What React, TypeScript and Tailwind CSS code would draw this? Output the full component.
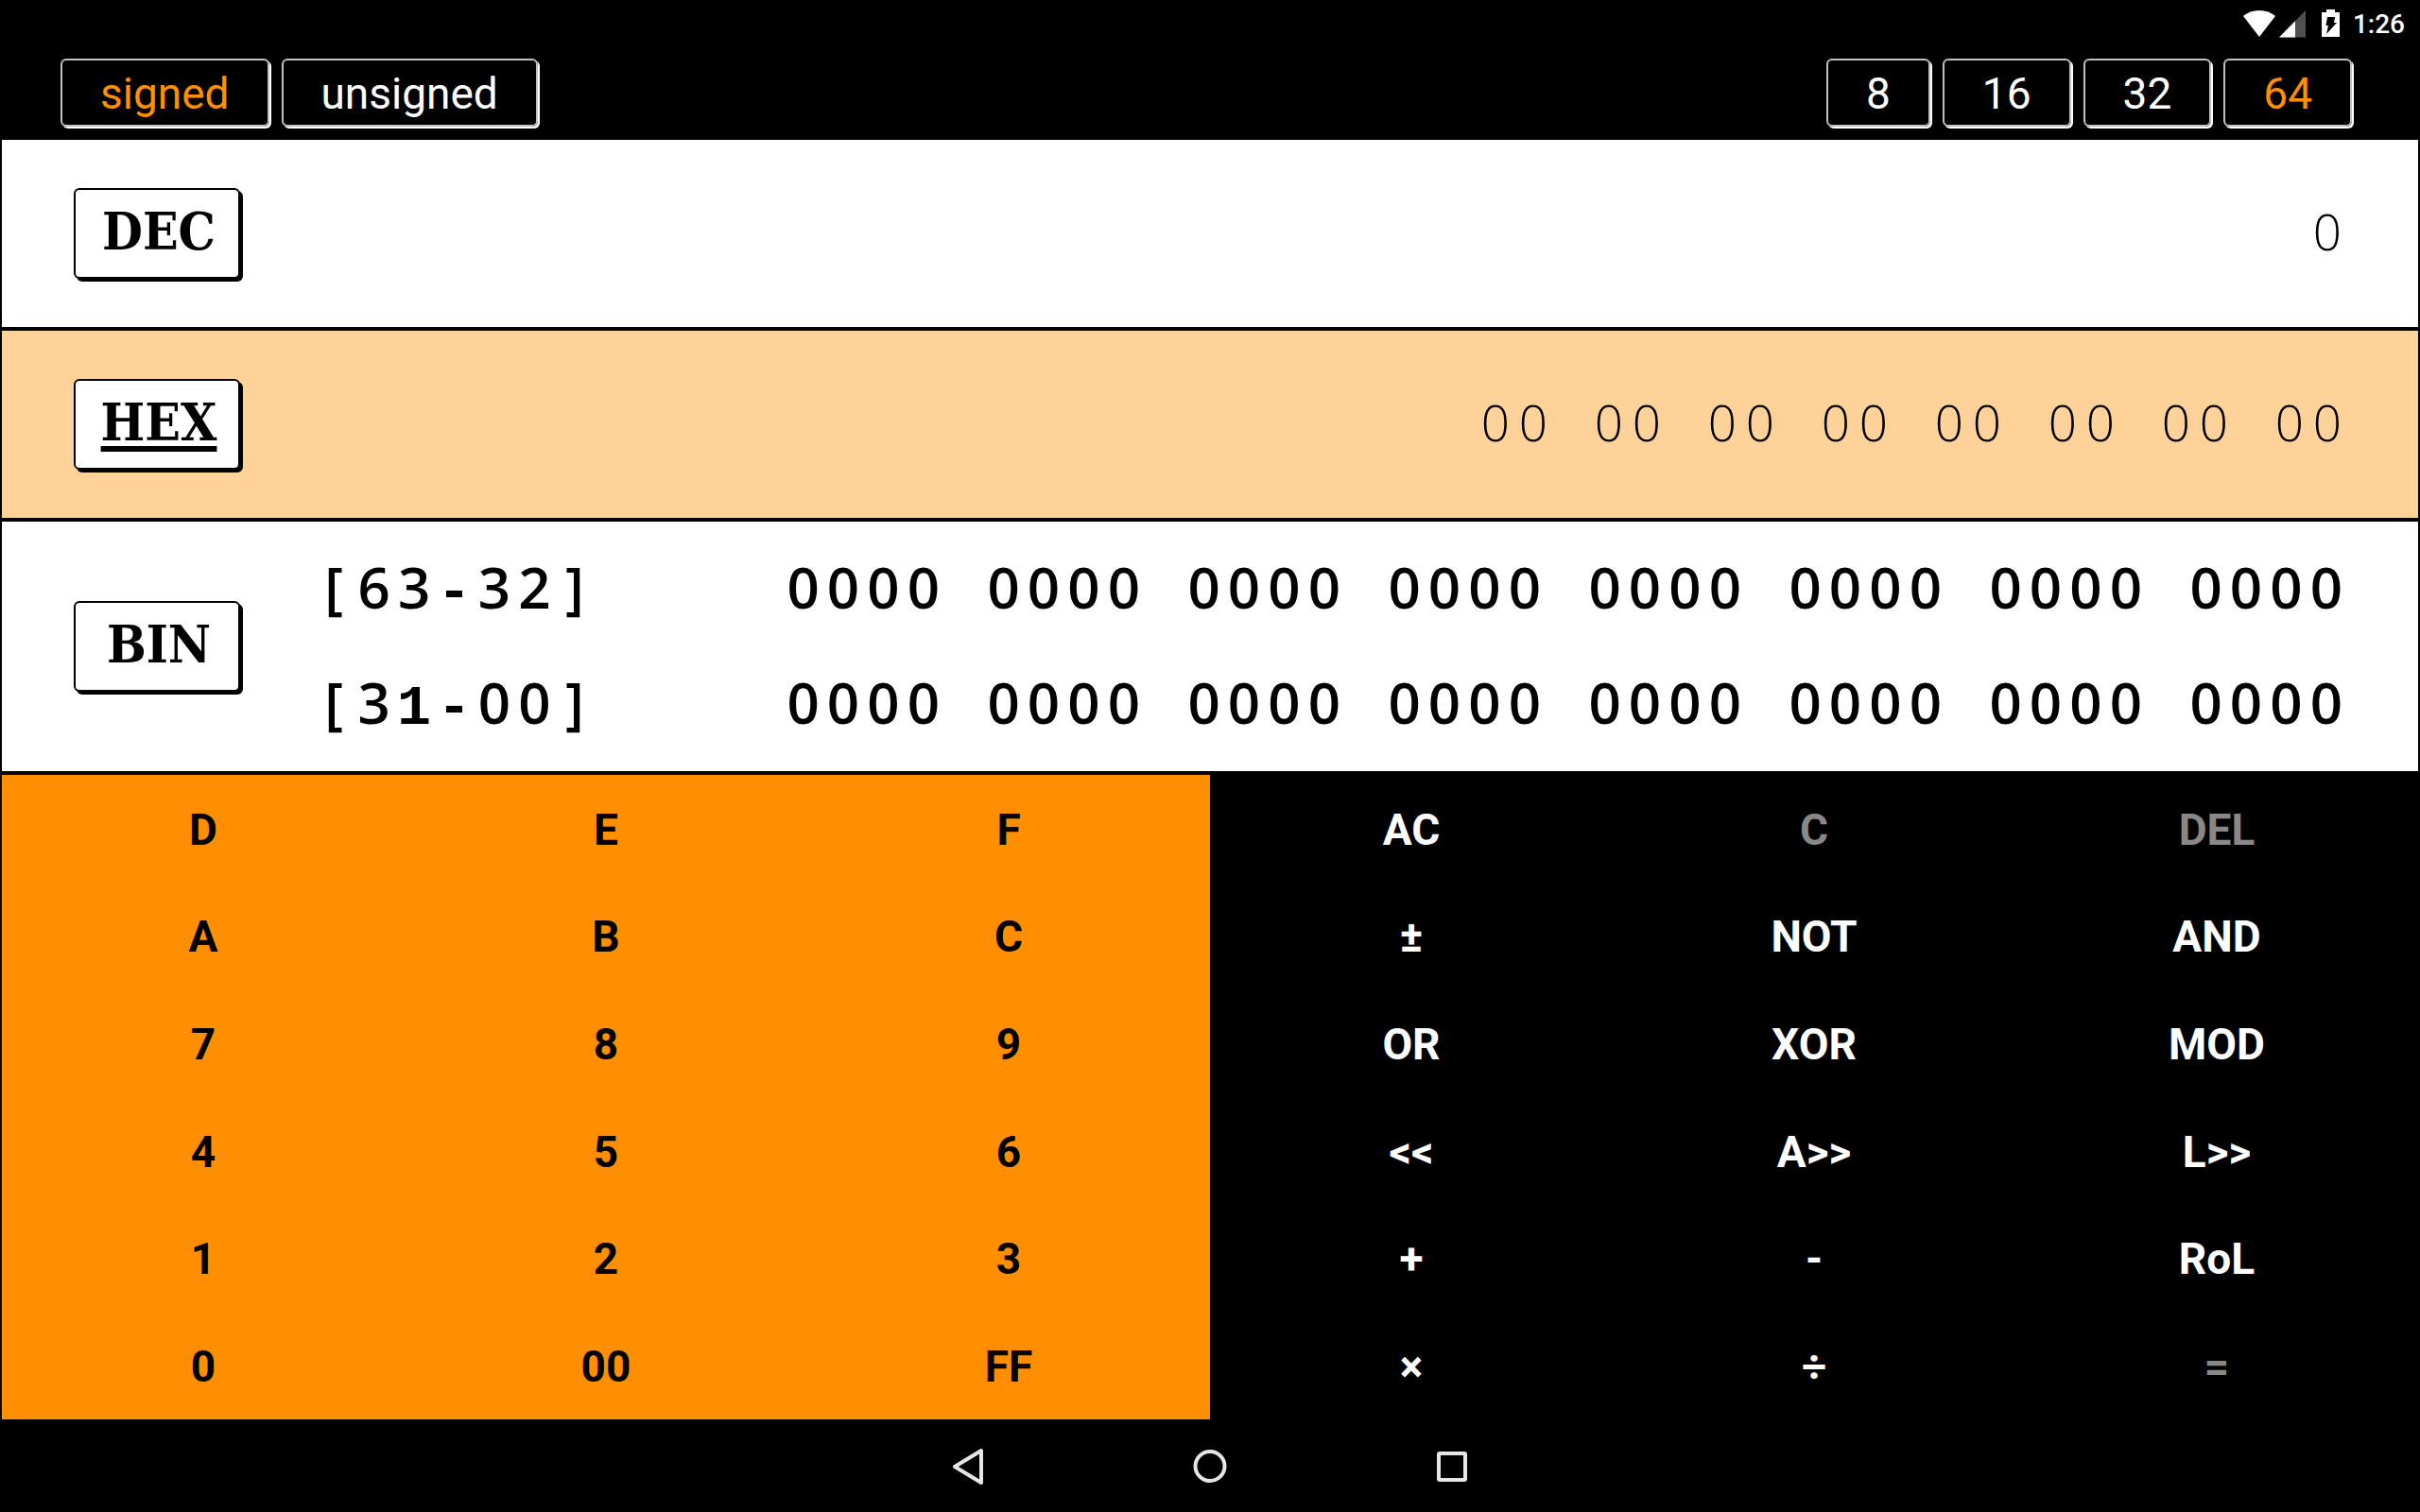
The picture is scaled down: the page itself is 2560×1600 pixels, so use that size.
import type { ReactNode } from "react";

const SIGN_MODES = ["signed", "unsigned"];
const WORD_SIZES = ["8", "16", "32", "64"];

const DIGIT_KEYS = [
  "D", "E", "F",
  "A", "B", "C",
  "7", "8", "9",
  "4", "5", "6",
  "1", "2", "3",
  "0", "00", "FF",
];

const OPERATION_KEYS = [
  "AC", "C", "DEL",
  "±", "NOT", "AND",
  "OR", "XOR", "MOD",
  "<<", "A>>", "L>>",
  "+", "-", "RoL",
  "×", "÷", "=",
];

const DISABLED_KEYS = ["C", "DEL", "="];

const HEX_BYTES = Array.from({ length: 8 }, () => "00");
const BIN_WORDS = [
  { range: "[63-32]", nibbles: Array.from({ length: 8 }, () => "0000") },
  { range: "[31-00]", nibbles: Array.from({ length: 8 }, () => "0000") },
];

function OptionButton({ label, active }: { label: string; active: boolean }) {
  return (
    <button
      type="button"
      aria-pressed={active}
      className={`h-18 rounded-md border-2 border-[#c0c0c0] px-10 text-[46px] leading-[70px] shadow-[2px_2px_0_0_#ffffff] ${
        active ? "text-[#ff8f00]" : "text-white"
      }`}
    >
      {label}
    </button>
  );
}

function BaseButton({ label, active = false }: { label: string; active?: boolean }) {
  return (
    <button
      type="button"
      aria-pressed={active}
      className={`h-24 w-44 shrink-0 rounded-md border-2 border-black bg-white pb-1 pl-1 text-center font-['DejaVu_Serif_Condensed','DejaVu_Serif',serif] text-[55px] leading-[88px] font-bold text-black shadow-[3px_3px_0_0_#000000] ${
        active ? "underline decoration-[6px] underline-offset-[6px]" : ""
      }`}
    >
      {label}
    </button>
  );
}

function Row({ active = false, children }: { active?: boolean; children: ReactNode }) {
  return (
    <section
      className={`flex items-center justify-between border-b-4 border-black pr-19 pl-19 ${
        active ? "bg-[#ffd299]" : "bg-white"
      }`}
    >
      {children}
    </section>
  );
}

function Range({ text }: { text: string }) {
  return (
    <div className="grid w-[297px] grid-cols-7 items-baseline text-center">
      {text.split("").map((char, i) => (
        <span
          key={i}
          className={
            char === "1" || char === "-"
              ? "font-['Liberation_Mono',monospace] font-bold"
              : ""
          }
        >
          {char}
        </span>
      ))}
    </div>
  );
}

function StatusBar() {
  return (
    <header className="flex h-[50px] items-center justify-end pr-4 text-[28px] leading-[52px] font-medium">
      <svg className="h-[50px] w-[34px]" viewBox="0 0 34 50" aria-hidden="true">
        <path d="M17 39 0 17C4.500 13 10.500 11 17 11s12.500 2 17 6z" fill="#fff" />
      </svg>
      <svg className="ml-1 h-[50px] w-[28px]" viewBox="0 0 28 50" aria-hidden="true">
        <path d="M28 11v28.500H0z" fill="#505050" />
        <path d="M17 22.200v17.300H0z" fill="#fff" />
      </svg>
      <svg className="mr-[14px] ml-[17px] h-[50px] w-[19px]" viewBox="0 0 19 50" aria-hidden="true">
        <path
          fillRule="evenodd"
          d="M5 10h9v3h5v26H0V13h5zM6 18h8l-1 6h3L5 36l2-9H4.500z"
          fill="#fff"
        />
      </svg>
      <span className="pt-0.5">1:26</span>
    </header>
  );
}

function NavBar() {
  return (
    <nav className="flex h-[98px] items-center justify-center gap-52">
      <button type="button" aria-label="Back" className="size-12">
        <svg viewBox="0 0 48 48" fill="none" stroke="#e6e6e6" strokeWidth="4" strokeLinejoin="round">
          <path d="M38 8v34L10 25z" />
        </svg>
      </button>
      <button type="button" aria-label="Home" className="size-12">
        <svg viewBox="0 0 48 48" fill="none" stroke="#e6e6e6" strokeWidth="4">
          <circle cx="24" cy="24.500" r="15.500" />
        </svg>
      </button>
      <button type="button" aria-label="Overview" className="size-12">
        <svg viewBox="0 0 48 48" fill="none" stroke="#e6e6e6" strokeWidth="4">
          <rect x="10" y="11" width="28" height="28" rx="1" />
        </svg>
      </button>
    </nav>
  );
}

export default function App() {
  return (
    <div className="flex min-h-screen flex-col bg-black font-[Roboto,sans-serif] text-white">
      <StatusBar />

      <div className="flex h-[98px] justify-between pt-3 pr-18 pl-16">
        <div className="flex gap-[13px]">
          {SIGN_MODES.map((mode) => (
            <OptionButton key={mode} label={mode} active={mode === "signed"} />
          ))}
        </div>
        <div className="flex gap-[13px]">
          {WORD_SIZES.map((size) => (
            <OptionButton key={size} label={size} active={size === "64"} />
          ))}
        </div>
      </div>

      <main className="flex grow flex-col px-[2px]">
        <div className="grid grid-rows-[202px_202px_268px] font-['Open_Sans',sans-serif] text-black">
          <Row>
            <BaseButton label="DEC" />
            <output className="w-10 pb-1 text-center text-[53px] leading-[60px] font-light">0</output>
          </Row>

          <Row active>
            <BaseButton label="HEX" active />
            <output className="flex gap-10 pb-1 text-[53px] leading-[60px] font-light">
              {HEX_BYTES.map((byte, i) => (
                <span key={i} className="grid w-20 grid-cols-2 text-center">
                  {byte.split("").map((digit, j) => (
                    <span key={j}>{digit}</span>
                  ))}
                </span>
              ))}
            </output>
          </Row>

          <Row>
            <BaseButton label="BIN" />
            <div className="ml-[78px] grow text-[60px] leading-[118px] font-semibold">
              {BIN_WORDS.map(({ range, nibbles }) => (
                <div key={range} className="flex h-[122px] items-baseline justify-between">
                  <Range text={range} />
                  <output className="flex">
                    {nibbles.map((nibble, i) => (
                      <span key={i} className="grid w-[212px] grid-cols-5 text-center">
                        <span>&nbsp;</span>
                        {nibble.split("").map((bit, j) => (
                          <span key={j}>{bit}</span>
                        ))}
                      </span>
                    ))}
                  </output>
                </div>
              ))}
            </div>
          </Row>
        </div>

        <div className="grid grow grid-cols-2 text-[46px] leading-[54px] font-bold">
          <div className="grid grid-cols-3 grid-rows-6 bg-[#ff8f00] text-black">
            {DIGIT_KEYS.map((key) => (
              <button key={key} type="button" className="pt-0.5">
                {key}
              </button>
            ))}
          </div>
          <div className="grid grid-cols-3 grid-rows-6">
            {OPERATION_KEYS.map((key) => (
              <button
                key={key}
                type="button"
                disabled={DISABLED_KEYS.includes(key)}
                className="pt-0.5 disabled:text-[#888888]"
              >
                {key}
              </button>
            ))}
          </div>
        </div>
      </main>

      <NavBar />
    </div>
  );
}
